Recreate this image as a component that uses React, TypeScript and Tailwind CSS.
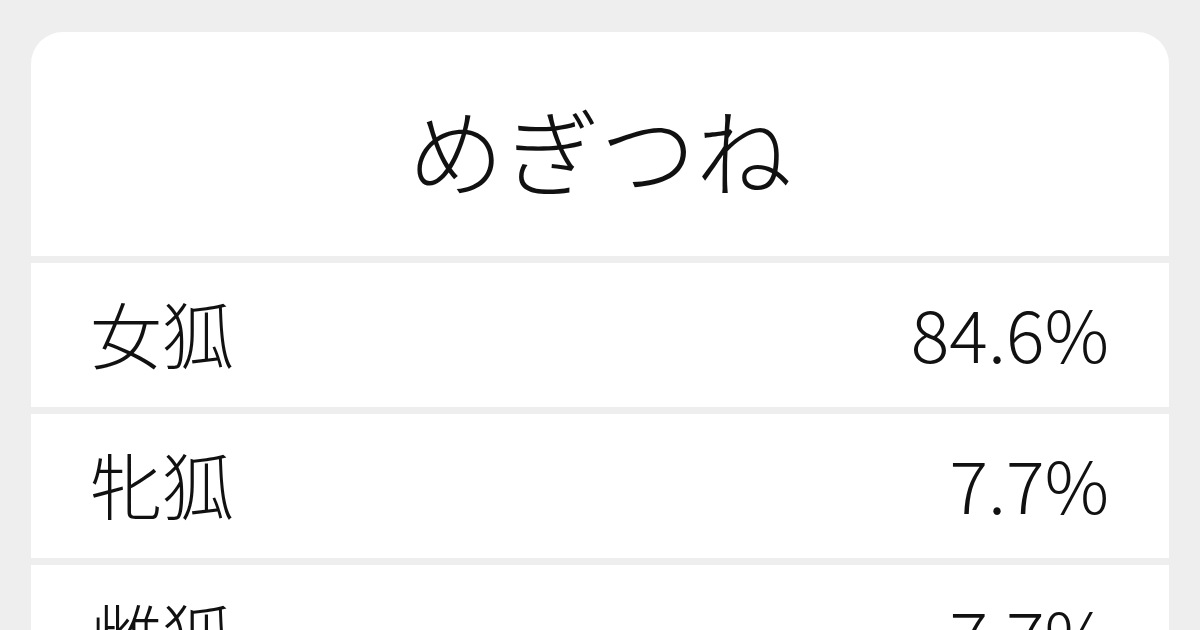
const rows = [
  { name: '女狐', pct: '84.6%' },
  { name: '牝狐', pct: '7.7%' },
  { name: '雌狐', pct: '7.7%' },
];

export default function App() {
  return (
    <div
      className="w-[1200px] h-[630px] overflow-hidden bg-[#eeeeee] pt-[32px] px-[31px] text-[#111111]"
      style={{ fontFamily: '"Noto Sans CJK JP", "Noto Sans", sans-serif' }}
    >
      <div className="flex flex-col gap-[7px] rounded-t-[32px] overflow-hidden">
        <div className="bg-white h-[224px] flex items-center justify-center pt-[8px]">
          <h1 className="text-[96px] font-light leading-none">めぎつね</h1>
        </div>
        {rows.map((r) => (
          <div
            key={r.name}
            className="bg-white h-[144px] flex items-center justify-between pl-[59px] pr-[60px] pb-[6px]"
          >
            <span className="text-[72px] font-light leading-none">{r.name}</span>
            <span className="text-[72px] font-light leading-none">{r.pct}</span>
          </div>
        ))}
      </div>
    </div>
  );
}
